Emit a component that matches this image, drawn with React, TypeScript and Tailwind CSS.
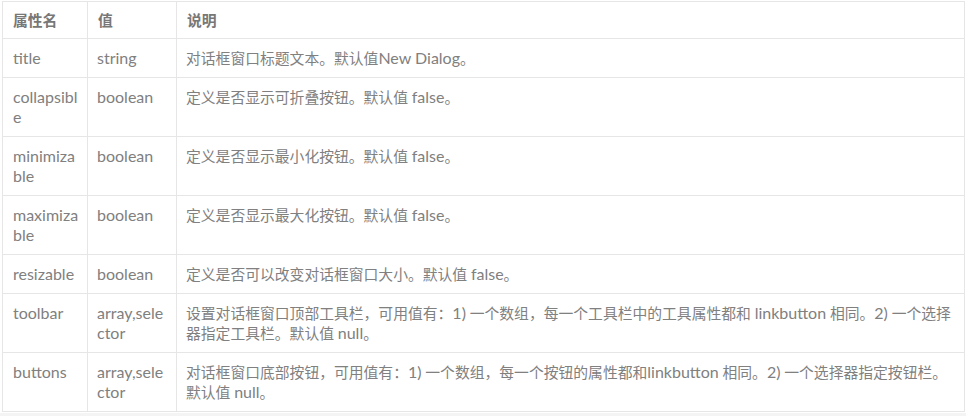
import React from "react";

const L = ({ children }: { children: React.ReactNode }) => <span className="text-[16px]">{children}</span>;

const rows: { name: React.ReactNode; type: React.ReactNode; desc: React.ReactNode }[] = [
  { name: "title", type: "string", desc: <>对话框窗口标题文本。默认值<L>New Dialog</L>。</> },
  { name: <>collapsibl<br />e</>, type: "boolean", desc: <>定义是否显示可折叠按钮。默认值 <L>false</L>。</> },
  { name: <>minimiza<br />ble</>, type: "boolean", desc: <>定义是否显示最小化按钮。默认值 <L>false</L>。</> },
  { name: <>maximiza<br />ble</>, type: "boolean", desc: <>定义是否显示最大化按钮。默认值 <L>false</L>。</> },
  { name: "resizable", type: "boolean", desc: <>定义是否可以改变对话框窗口大小。默认值 <L>false</L>。</> },
  {
    name: "toolbar",
    type: <>array,sele<br />ctor</>,
    desc: (
      <>
        设置对话框窗口顶部工具栏，可用值有：<L>1)</L> 一个数组，每一个工具栏中的工具属性都和 <L>linkbutton</L> 相同。<L>2)</L> 一个选择
        <br />
        器指定工具栏。默认值 <L>null</L>。
      </>
    ),
  },
  {
    name: "buttons",
    type: <>array,sele<br />ctor</>,
    desc: (
      <>
        对话框窗口底部按钮，可用值有：<L>1)</L> 一个数组，每一个按钮的属性都和<L>linkbutton</L> 相同。<L>2)</L> 一个选择器指定按钮栏。
        <br />
        默认值 <L>null</L>。
      </>
    ),
  },
];

export default function App() {
  return (
    <div
      className="w-[974px] h-[416px] bg-white overflow-hidden"
      style={{ fontFamily: 'Lato, "Noto Sans CJK SC", sans-serif' }}
    >
      <div className="pl-[2px] pt-[1px]">
        <table className="w-[963px] border-collapse table-fixed text-[14.8px] leading-[20px] text-[#808080]">
          <colgroup>
            <col className="w-[85px]" />
            <col className="w-[89px]" />
            <col />
          </colgroup>
          <thead>
            <tr>
              <th className="border border-[#e6e6e6] text-left font-bold text-[#777] px-[10px] py-[8px] whitespace-nowrap">属性名</th>
              <th className="border border-[#e6e6e6] text-left font-bold text-[#777] px-[10px] py-[8px] whitespace-nowrap">值</th>
              <th className="border border-[#e6e6e6] text-left font-bold text-[#777] px-[10px] py-[8px] whitespace-nowrap">说明</th>
            </tr>
          </thead>
          <tbody>
            {rows.map((r, i) => (
              <tr key={i}>
                <td className="border border-[#e6e6e6] align-top px-[10px] py-[9px] whitespace-nowrap text-[16px]">{r.name}</td>
                <td className="border border-[#e6e6e6] align-top px-[9px] py-[9px] whitespace-nowrap text-[16px]">{r.type}</td>
                <td className="border border-[#e6e6e6] align-top px-[9px] py-[9px] whitespace-nowrap">{r.desc}</td>
              </tr>
            ))}
          </tbody>
        </table>
      </div>
      <div className="mt-[1px] w-[966px] h-[6px] bg-[#f4f4f4]" />
    </div>
  );
}
